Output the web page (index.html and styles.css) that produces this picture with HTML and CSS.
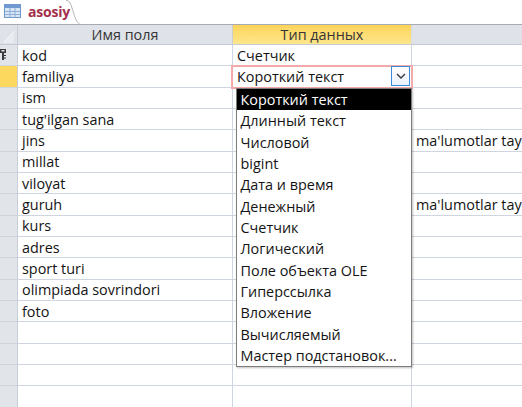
FILE: index.html
```html
<!DOCTYPE html>
<html lang="ru">
<head>
<meta charset="utf-8">
<title>asosiy</title>
<link rel="stylesheet" href="styles.css">
</head>
<body>
<div class="tabbar">
  <div class="tab">
    <svg class="tab-icon" width="17" height="14" viewBox="0 0 17 14">
      <rect x="0.5" y="0.5" width="16" height="13" fill="#d7e5f5" stroke="#6f98cc"/>
      <rect x="1" y="1" width="15" height="3" fill="#6f9ad2"/>
      <path d="M1 7.5H16M1 10.5H16M6 4V13.5M11 4V13.5" stroke="#8fb0da" stroke-width="1" fill="none"/>
    </svg>
    <span class="tab-label">asosiy</span>
  </div>
  <svg class="tab-curve" width="14" height="24" viewBox="0 0 14 24">
    <path d="M0 0.5 C3 0.5 4 2 6 8 S10 23 13.5 23.5" fill="none" stroke="#b4b4b4" stroke-width="1"/>
  </svg>
  <div class="tab-fill"></div>
</div>

<div class="grid">
  <div class="hrow">
    <div class="sel corner">
      <svg width="17" height="20" viewBox="0 0 17 20"><path d="M3 18 L14 6 L14 18 Z" fill="#e8ebef"/><path d="M3.5 18 L14.5 6" stroke="#f4f6f8" stroke-width="1"/></svg>
    </div>
    <div class="c1 hcell">Имя поля</div>
    <div class="c2 hcell hactive">Тип данных</div>
    <div class="c3 hcell"></div>
  </div>

  <div class="row">
    <div class="sel">
      <svg class="key" width="7" height="11" viewBox="0 0 7 11">
        <path d="M0 0H6V4H4V11H2V4H0Z" fill="#3a3a3a"/>
        <rect x="1.5" y="1" width="3" height="1.5" fill="#e0e3e7"/>
        <rect x="4" y="6" width="2" height="1" fill="#3a3a3a"/>
        <rect x="4" y="8.5" width="2" height="1" fill="#3a3a3a"/>
      </svg>
    </div>
    <div class="c1">kod</div><div class="c2">Счетчик</div><div class="c3"></div>
  </div>

  <div class="row">
    <div class="sel selected"></div>
    <div class="c1">familiya</div>
    <div class="c2 combo">
      <span class="combo-text">Короткий текст</span>
      <span class="combo-btn">
        <svg width="10" height="6" viewBox="0 0 10 6"><path d="M1 1 L5 5 L9 1" fill="none" stroke="#3b3b3b" stroke-width="1.4"/></svg>
      </span>
      <ul class="dropdown">
        <li class="picked">Короткий текст</li>
        <li>Длинный текст</li>
        <li>Числовой</li>
        <li>bigint</li>
        <li>Дата и время</li>
        <li>Денежный</li>
        <li>Счетчик</li>
        <li>Логический</li>
        <li>Поле объекта OLE</li>
        <li>Гиперссылка</li>
        <li>Вложение</li>
        <li>Вычисляемый</li>
        <li>Мастер подстановок...</li>
      </ul>
    </div>
    <div class="c3"></div>
  </div>

  <div class="row"><div class="sel"></div><div class="c1">ism</div><div class="c2"></div><div class="c3"></div></div>
  <div class="row"><div class="sel"></div><div class="c1">tug'ilgan sana</div><div class="c2"></div><div class="c3"></div></div>
  <div class="row"><div class="sel"></div><div class="c1">jins</div><div class="c2"></div><div class="c3">ma'lumotlar tay</div></div>
  <div class="row"><div class="sel"></div><div class="c1">millat</div><div class="c2"></div><div class="c3"></div></div>
  <div class="row"><div class="sel"></div><div class="c1">viloyat</div><div class="c2"></div><div class="c3"></div></div>
  <div class="row"><div class="sel"></div><div class="c1">guruh</div><div class="c2"></div><div class="c3">ma'lumotlar tay</div></div>
  <div class="row"><div class="sel"></div><div class="c1">kurs</div><div class="c2"></div><div class="c3"></div></div>
  <div class="row"><div class="sel"></div><div class="c1">adres</div><div class="c2"></div><div class="c3"></div></div>
  <div class="row"><div class="sel"></div><div class="c1">sport turi</div><div class="c2"></div><div class="c3"></div></div>
  <div class="row"><div class="sel"></div><div class="c1">olimpiada sovrindori</div><div class="c2"></div><div class="c3"></div></div>
  <div class="row"><div class="sel"></div><div class="c1">foto</div><div class="c2"></div><div class="c3"></div></div>
  <div class="row"><div class="sel"></div><div class="c1"></div><div class="c2"></div><div class="c3"></div></div>
  <div class="row"><div class="sel"></div><div class="c1"></div><div class="c2"></div><div class="c3"></div></div>
  <div class="row"><div class="sel"></div><div class="c1"></div><div class="c2"></div><div class="c3"></div></div>
  <div class="row"><div class="sel"></div><div class="c1"></div><div class="c2"></div><div class="c3"></div></div>
</div>
</body>
</html>
```

FILE: styles.css
```css
* { box-sizing: border-box; }

html, body {
  margin: 0;
  padding: 0;
  background: #ffffff;
  overflow: hidden;
}

body {
  width: 522px;
  height: 407px;
  font-family: "Open Sans", "Noto Sans", "DejaVu Sans", sans-serif;
  font-size: 14.4px;
  color: #141414;
}

/* ---------- tab strip ---------- */
.tabbar {
  display: flex;
  height: 24px;
  background: #ffffff;
}

.tab {
  display: flex;
  align-items: center;
  gap: 7px;
  width: 66px;
  padding-left: 4px;
  padding-bottom: 2px;
}

.tab-icon { flex: none; }

.tab-label {
  font-weight: 700;
  font-size: 14px;
  color: #a3304b;
  letter-spacing: -0.2px;
}

.tab-curve { flex: none; display: block; }

.tab-fill {
  flex: 1;
}

/* ---------- grid ---------- */
.grid {
  display: flex;
  flex-direction: column;
}

.hrow, .row {
  display: flex;
}

.hrow {
  height: 21px;
  border-top: 1px solid #a7abb1;
  background: #dfe2e8;
}

.row {
  height: 21.333px;
}

.sel, .c1, .c2, .c3 {
  flex: none;
  display: flex;
  align-items: center;
  border-bottom: 1px solid #cfd6e2;
  white-space: nowrap;
  overflow: visible;
}

.sel {
  width: 18px;
  background: #e1e4e9;
  border-right: 1px solid #c8ced8;
  border-bottom-color: #cfd4dc;
  position: relative;
}

.sel.selected {
  background: #fcd85f;
}

.c1 {
  width: 215px;
  padding-left: 4px;
  border-right: 1px solid #cfd6e2;
}

.c2 {
  width: 179px;
  padding-left: 4px;
  border-right: 1px solid #cfd6e2;
}

.c3 {
  flex: 1;
  padding-left: 4px;
  overflow: hidden;
}

/* header cells */
.hrow .sel, .hcell {
  border-bottom: 1px solid #c5cbd5;
}

.hrow .sel {
  background: #dfe2e8;
}

.hcell {
  justify-content: center;
  padding-left: 0;
  color: #353535;
  border-right-color: #c9cfd8;
}

.hcell.hactive {
  background: linear-gradient(#fdd45a, #fee68d);
  border-right-color: #d7dbe2;
}

.c3.hcell { justify-content: flex-start; }

.corner svg { display: block; }

.key {
  position: absolute;
  left: 0;
  top: 4px;
}

/* ---------- combo ---------- */
.combo {
  position: relative;
  justify-content: space-between;
  padding-right: 1px;
}

.combo::before {
  content: "";
  position: absolute;
  left: -2px;
  top: -1px;
  right: -2px;
  bottom: -2px;
  border: 2px solid #f4a9ab;
  pointer-events: none;
}

.combo-text { position: relative; }

.combo-btn {
  position: relative;
  display: flex;
  align-items: center;
  justify-content: center;
  width: 19px;
  height: 20px;
  margin-top: -1px;
  border: 1px solid #3b8ad8;
  background: linear-gradient(#ffffff, #e9f2fc);
}

.dropdown {
  position: absolute;
  left: 2.5px;
  top: 21.5px;
  width: 176px;
  margin: 0;
  padding: 0;
  list-style: none;
  background: #ffffff;
  border: 1px solid #7c7c7c;
  box-shadow: 1px 1px 2px rgba(0,0,0,0.25);
  z-index: 5;
}

.dropdown li {
  height: 21.333px;
  display: flex;
  align-items: center;
  padding-left: 4px;
  color: #141414;
}

.dropdown li.picked {
  background: #000000;
  color: #ffffff;
}
```
